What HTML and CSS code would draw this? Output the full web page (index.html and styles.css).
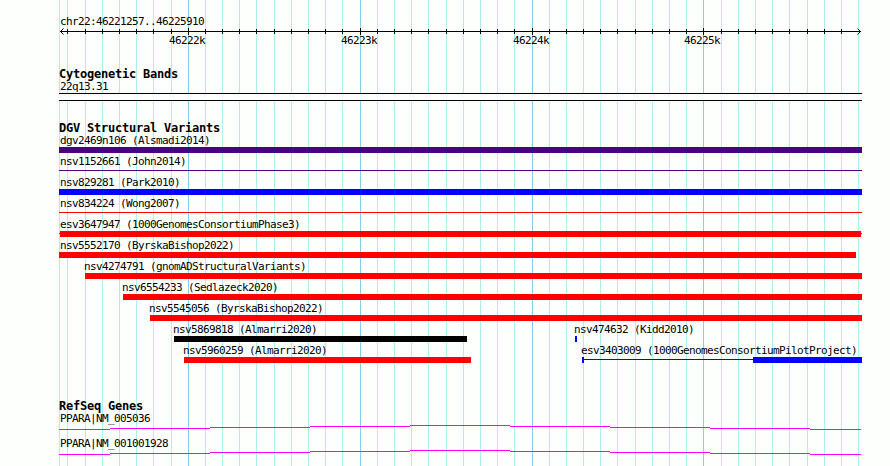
FILE: index.html
```html
<!DOCTYPE html>
<html lang="en">

<head>
    <meta charset="utf-8">
    <title>chr22:46221257..46225910</title>
    <link rel="stylesheet" href="styles.css">
</head>

<body>
    <div class="browser">
        <!-- vertical grid, one line per 100 bp -->
        <svg class="grid" width="890" height="466" shape-rendering="crispEdges">
            <path class="minor" d="M59.5 0V466M67.5 0V466M85.5 0V466M102.5 0V466M119.5 0V466M136.5 0V466M153.5 0V466M171.5 0V466M205.5 0V466M222.5 0V466M239.5 0V466M256.5 0V466M274.5 0V466M291.5 0V466M308.5 0V466M325.5 0V466M342.5 0V466M377.5 0V466M394.5 0V466M411.5 0V466M428.5 0V466M446.5 0V466M463.5 0V466M480.5 0V466M497.5 0V466M514.5 0V466M549.5 0V466M566.5 0V466M583.5 0V466M600.5 0V466M617.5 0V466M635.5 0V466M652.5 0V466M669.5 0V466M686.5 0V466M721.5 0V466M738.5 0V466M755.5 0V466M772.5 0V466M789.5 0V466M807.5 0V466M824.5 0V466M841.5 0V466M858.5 0V466"/>
            <path class="major" d="M188.5 0V466M360.5 0V466M532.5 0V466M703.5 0V466"/>
        </svg>

        <div class="ruler">
            <div class="label">chr22:46221257..46225910</div>
            <svg class="scale" width="803" height="9" shape-rendering="crispEdges">
                <path d="M1 4.5H802"/>
                <path d="M8.5 2V7M26.5 2V7M43.5 2V7M60.5 2V7M77.5 2V7M94.5 2V7M112.5 2V7M146.5 2V7M163.5 2V7M180.5 2V7M197.5 2V7M215.5 2V7M232.5 2V7M249.5 2V7M266.5 2V7M283.5 2V7M318.5 2V7M335.5 2V7M352.5 2V7M369.5 2V7M387.5 2V7M404.5 2V7M421.5 2V7M438.5 2V7M455.5 2V7M490.5 2V7M507.5 2V7M524.5 2V7M541.5 2V7M558.5 2V7M576.5 2V7M593.5 2V7M610.5 2V7M627.5 2V7M662.5 2V7M679.5 2V7M696.5 2V7M713.5 2V7M730.5 2V7M748.5 2V7M765.5 2V7M782.5 2V7"/>
                <path d="M129.5 1V8M301.5 1V8M473.5 1V8M644.5 1V8"/>
                <path class="arrow" d="M4.5 1.5L1.5 4.5L4.5 7.5M798.5 1.5L801.5 4.5L798.5 7.5"/>
            </svg>
            <div class="ticks">
                <span>46222k</span>
                <span>46223k</span>
                <span>46224k</span>
                <span>46225k</span>
            </div>
        </div>

        <div class="track cytoband">
            <h2>Cytogenetic Bands</h2>
            <div class="label">22q13.31</div>
            <div class="band"></div>
        </div>

        <div class="track variants">
            <h2>DGV Structural Variants</h2>
            <div class="row">
                <div class="feature" style="width: 803px">
                    <div class="label">dgv2469n106 (Alsmadi2014)</div>
                    <div class="bar indigo"></div>
                </div>
            </div>
            <div class="row">
                <div class="feature" style="width: 803px">
                    <div class="label">nsv1152661 (John2014)</div>
                    <div class="bar thin indigo"></div>
                </div>
            </div>
            <div class="row">
                <div class="feature" style="width: 803px">
                    <div class="label">nsv829281 (Park2010)</div>
                    <div class="bar blue"></div>
                </div>
            </div>
            <div class="row">
                <div class="feature" style="width: 803px">
                    <div class="label">nsv834224 (Wong2007)</div>
                    <div class="bar thin red"></div>
                </div>
            </div>
            <div class="row">
                <div class="feature" style="width: 803px">
                    <div class="label">esv3647947 (1000GenomesConsortiumPhase3)</div>
                    <div class="split">
                        <div class="link red" style="width: 1px"></div>
                        <div class="bar red" style="width: 801px"></div>
                        <div class="link red" style="width: 1px"></div>
                    </div>
                </div>
            </div>
            <div class="row">
                <div class="feature" style="width: 797px">
                    <div class="label">nsv5552170 (ByrskaBishop2022)</div>
                    <div class="bar red"></div>
                </div>
            </div>
            <div class="row">
                <div class="feature inner" style="margin-left: 26px; width: 777px">
                    <div class="label">nsv4274791 (gnomADStructuralVariants)</div>
                    <div class="bar red"></div>
                </div>
            </div>
            <div class="row">
                <div class="feature inner" style="margin-left: 64px; width: 739px">
                    <div class="label">nsv6554233 (Sedlazeck2020)</div>
                    <div class="bar red"></div>
                </div>
            </div>
            <div class="row">
                <div class="feature inner" style="margin-left: 91px; width: 712px">
                    <div class="label">nsv5545056 (ByrskaBishop2022)</div>
                    <div class="bar red"></div>
                </div>
            </div>
            <div class="row">
                <div class="feature inner" style="margin-left: 115px; width: 293px">
                    <div class="label">nsv5869818 (Almarri2020)</div>
                    <div class="bar black"></div>
                </div>
                <div class="feature inner" style="margin-left: 108px; width: 2px">
                    <div class="label">nsv474632 (Kidd2010)</div>
                    <div class="bar blue"></div>
                </div>
            </div>
            <div class="row">
                <div class="feature inner" style="margin-left: 125px; width: 287px">
                    <div class="label">nsv5960259 (Almarri2020)</div>
                    <div class="bar red"></div>
                </div>
                <div class="feature inner" style="margin-left: 111px; width: 280px">
                    <div class="label">esv3403009 (1000GenomesConsortiumPilotProject)</div>
                    <div class="split">
                        <div class="bar blue" style="width: 2px"></div>
                        <div class="link blue" style="width: 169px"></div>
                        <div class="bar blue" style="width: 109px"></div>
                    </div>
                </div>
            </div>
        </div>

        <div class="track genes">
            <h2>RefSeq Genes</h2>
            <div class="gene">
                <div class="label">PPARA|NM_005036</div>
                <svg class="intron" width="803" height="6" shape-rendering="crispEdges">
                    <path d="M0 4.5H51M51 3.5H151M151 2.5H251M251 1.5H351M351 .5H451M451 1.5H551M551 2.5H651M651 3.5H751M751 4.5H802"/>
                </svg>
            </div>
            <div class="gene">
                <div class="label">PPARA|NM_001001928</div>
                <svg class="intron" width="803" height="6" shape-rendering="crispEdges">
                    <path d="M0 4.5H51M51 3.5H151M151 2.5H251M251 1.5H351M351 .5H451M451 1.5H551M551 2.5H651M651 3.5H751M751 4.5H802"/>
                </svg>
            </div>
        </div>
    </div>
</body>

</html>
```
FILE: styles.css
```css
* {
    box-sizing: border-box;
    margin: 0;
    padding: 0;
}

body {
    font-family: "DejaVu Sans Mono", monospace;
    background: #fdfffc;
    color: #000;
    overflow: hidden;
}

.browser {
    position: relative;
    width: 890px;
    height: 466px;
    padding: 16px 28px 0 59px;
}

.grid {
    position: absolute;
    top: 0;
    left: 0;
    z-index: -1;
}

.grid path {
    fill: none;
    stroke-width: 1;
}

.grid .minor {
    stroke: #afeeee;
}

.grid .major {
    stroke: #87ceeb;
}

.label,
.ticks {
    font-size: 11px;
    line-height: 12px;
    letter-spacing: -0.622px;
    white-space: nowrap;
}

.label {
    height: 12px;
    padding-left: 1px;
}

h2 {
    height: 13px;
    font-size: 12px;
    line-height: 13px;
    letter-spacing: -0.224px;
    white-space: nowrap;
}

/* ruler */
.ruler {
    height: 52px;
}

.scale {
    display: block;
    margin-top: -1px;
    fill: none;
    stroke: #000;
}

.scale .arrow {
    shape-rendering: auto;
}

.ticks {
    display: flex;
    gap: 136px;
    padding-left: 110px;
    margin-top: -1px;
}

.ticks span {
    width: 36px;
}

.ticks span:last-child {
    margin-left: -1px;
}

/* tracks */
.cytoband {
    height: 54px;
}

.band {
    width: 803px;
    height: 8px;
    background: #fff;
    border-top: 1px solid #000;
    border-bottom: 1px solid #000;
}

.variants {
    height: 278px;
}

.row {
    display: flex;
    height: 21px;
}

.feature {
    flex: none;
}

.feature.inner .label {
    margin-left: -1px;
    padding-left: 0;
}

.bar {
    height: 6px;
}

.bar.thin {
    height: 1px;
    margin-top: 2px;
}

.split {
    display: flex;
}

.link {
    height: 1px;
    margin-top: 2px;
}

.indigo {
    background: #4b0082;
}

.blue {
    background: #0000ff;
}

.red {
    background: #ff0000;
}

.black {
    background: #000;
}

/* genes */
.gene {
    height: 25px;
}

.intron {
    display: block;
    fill: none;
    stroke: #ff00ff;
}
```
